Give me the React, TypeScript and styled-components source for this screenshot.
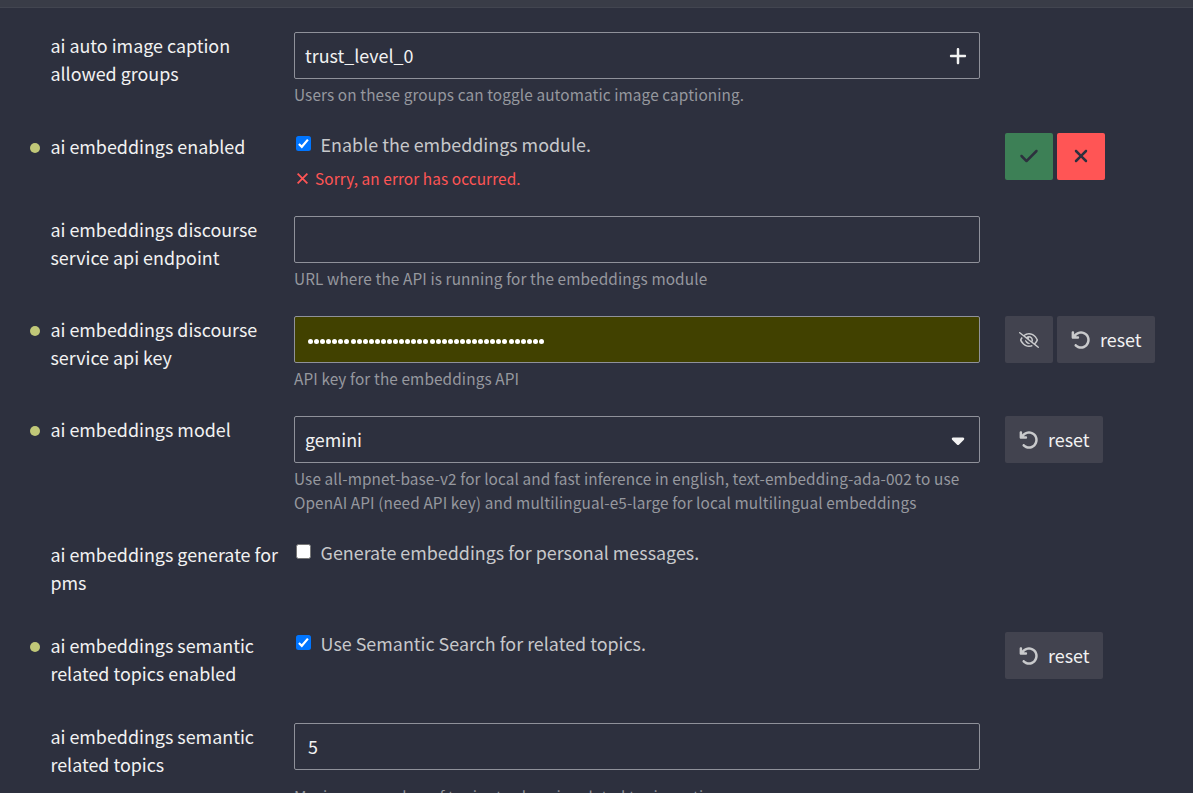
import React from "react";
import styled, { createGlobalStyle } from "styled-components";
import { FaPlus, FaCheck, FaXmark, FaRegEyeSlash, FaArrowRotateLeft, FaCaretDown } from "react-icons/fa6";

const GlobalStyle = createGlobalStyle`
  * { box-sizing: border-box; }
  html, body { margin: 0; background: #2d303e; overflow: hidden; }
  body {
    color: #f2f2f2;
    font-family: "Noto Sans CJK JP", "Noto Sans CJK SC", sans-serif;
    font-size: 17.9px;
    line-height: 28px;
  }
`;

const Page = styled.div`
  height: 793px;
  overflow: hidden;
`;

const TopBar = styled.div`
  height: 8px;
  background: #393c47;
  border-bottom: 1px solid #424550;
  margin-bottom: 24px;
`;

const Row = styled.section<{ $height: number }>`
  display: grid;
  grid-template-columns: 20.4px 243.6px 686px auto;
  height: ${(p) => p.$height}px;
  padding-left: 30px;
`;

const Marker = styled.span<{ $on?: boolean }>`
  width: 10px;
  height: 10px;
  margin-top: 10px;
  border-radius: 50%;
  background: ${(p) => (p.$on ? "#c1c878" : "transparent")};
`;

const Label = styled.h3`
  margin: -1px 0 0;
  padding-right: 10px;
  font-size: inherit;
  font-weight: 400;
  white-space: pre-line;
`;

const Field = styled.div<{ $filled?: boolean; $inset?: number }>`
  display: flex;
  align-items: center;
  justify-content: space-between;
  height: 47px;
  padding: 0 11px 1px ${(p) => p.$inset ?? 10}px;
  border: 1px solid #8f919a;
  border-radius: 2px;
  background: ${(p) => (p.$filled ? "#414100" : "transparent")};
  svg { margin-top: 2px; }
`;

const Secret = styled.span`
  display: flex;
  gap: 1.09px;
  padding-top: 4px;
`;

const Dot = styled.i`
  width: 5px;
  height: 5px;
  border-radius: 50%;
  background: #fff;
`;

const Help = styled.p<{ $gap?: number }>`
  margin: ${(p) => p.$gap ?? 3}px 0 0;
  color: #96989e;
  font-size: 15.35px;
  letter-spacing: 0.112px;
  line-height: 24px;
  white-space: pre-line;
`;

const CheckLine = styled.label`
  display: flex;
  height: 24px;
  line-height: 22px;
  color: #c7c8cb;
`;

const CheckBox = styled.span<{ $on?: boolean }>`
  display: flex;
  align-items: center;
  justify-content: center;
  width: 15px;
  height: 15px;
  margin: 3px 9.6px 0 2px;
  border-radius: 2.5px;
  background: ${(p) => (p.$on ? "#0075ff" : "#fff")};
  border: ${(p) => (p.$on ? "0" : "1px solid #767676")};
`;

const ErrorLine = styled.div`
  display: flex;
  align-items: center;
  margin-top: 9px;
  padding-left: 3px;
  gap: 7px;
  height: 24px;
  color: #ff5555;
  font-size: 15.35px;
  letter-spacing: 0.1px;
  line-height: 24px;
`;

const Actions = styled.div`
  display: flex;
  gap: 4px;
  padding-left: 25px;
`;

const Button = styled.button<{ $tone?: "ok" | "danger"; $wide?: boolean }>`
  display: flex;
  align-items: center;
  justify-content: ${(p) => (p.$wide ? "flex-start" : "center")};
  gap: 9px;
  width: ${(p) => (p.$wide ? 98 : 48)}px;
  height: 47px;
  padding: 0 0 1px ${(p) => (p.$wide ? 14 : 0)}px;
  border: 0;
  border-radius: 2px;
  background: ${(p) => (p.$tone === "ok" ? "#3d8056" : p.$tone === "danger" ? "#ff5555" : "#42434f")};
  color: #f2f2f2;
  font: inherit;
  svg {
    flex: none;
    margin-top: ${(p) => (p.$tone ? 0 : 2)}px;
    color: ${(p) => (p.$tone ? "#2d303e" : "#c9cacc")};
  }
`;

const Check = ({ on, children }: { on?: boolean; children: React.ReactNode }) => (
  <CheckLine>
    <CheckBox $on={on}>
      {on && (
        <svg width="15" height="15" viewBox="0 0 15 15" fill="none" stroke="#fff" strokeWidth="2.2">
          <path d="M2.9 8l2.9 2.8L11.9 3.6" />
        </svg>
      )}
    </CheckBox>
    <span>{children}</span>
  </CheckLine>
);

const Reset = () => (
  <Button $wide>
    <FaArrowRotateLeft size={20} />
    reset
  </Button>
);

type SettingProps = {
  height: number;
  label: string;
  changed?: boolean;
  actions?: React.ReactNode;
  children: React.ReactNode;
};

const Setting = ({ height, label, changed, actions, children }: SettingProps) => (
  <Row $height={height}>
    <Marker $on={changed} />
    <Label>{label}</Label>
    <div>{children}</div>
    <Actions>{actions}</Actions>
  </Row>
);

export default function App() {
  return (
    <Page>
      <GlobalStyle />
      <TopBar />
      <Setting height={101} label={"ai auto image caption\nallowed groups"}>
        <Field>
          trust_level_0
          <FaPlus size={20} />
        </Field>
        <Help>Users on these groups can toggle automatic image captioning.</Help>
      </Setting>
      <Setting
        height={83}
        label="ai embeddings enabled"
        changed
        actions={
          <>
            <Button $tone="ok"><FaCheck size={20} /></Button>
            <Button $tone="danger"><FaXmark size={20} /></Button>
          </>
        }
      >
        <Check on>Enable the embeddings module.</Check>
        <ErrorLine>
          <svg width="11" height="11" viewBox="0 0 11 11" fill="none" stroke="currentColor" strokeWidth="1.8">
            <path d="M.6 .6l9.8 9.8M10.4 .6L.6 10.4" />
          </svg>
          Sorry, an error has occurred.
        </ErrorLine>
      </Setting>
      <Setting height={100} label={"ai embeddings discourse\nservice api endpoint"}>
        <Field />
        <Help>URL where the API is running for the embeddings module</Help>
      </Setting>
      <Setting
        height={100}
        label={"ai embeddings discourse\nservice api key"}
        changed
        actions={
          <>
            <Button><FaRegEyeSlash size={20} /></Button>
            <Reset />
          </>
        }
      >
        <Field $filled $inset={13}>
          <Secret>
            {Array.from({ length: 39 }, (_, i) => <Dot key={i} />)}
          </Secret>
        </Field>
        <Help>API key for the embeddings API</Help>
      </Setting>
      <Setting height={125} label="ai embeddings model" changed actions={<Reset />}>
        <Field>
          gemini
          <FaCaretDown size={20} />
        </Field>
        <Help>{"Use all-mpnet-base-v2 for local and fast inference in english, text-embedding-ada-002 to use\nOpenAI API (need API key) and multilingual-e5-large for local multilingual embeddings"}</Help>
      </Setting>
      <Setting height={91} label={"ai embeddings generate for\npms"}>
        <Check>Generate embeddings for personal messages.</Check>
      </Setting>
      <Setting height={91} label={"ai embeddings semantic\nrelated topics enabled"} changed actions={<Reset />}>
        <Check on>Use Semantic Search for related topics.</Check>
      </Setting>
      <Setting height={110} label={"ai embeddings semantic\nrelated topics"}>
        <Field $inset={13}>5</Field>
        <Help $gap={14}>Maximum number of topics to show in related topic section.</Help>
      </Setting>
    </Page>
  );
}
